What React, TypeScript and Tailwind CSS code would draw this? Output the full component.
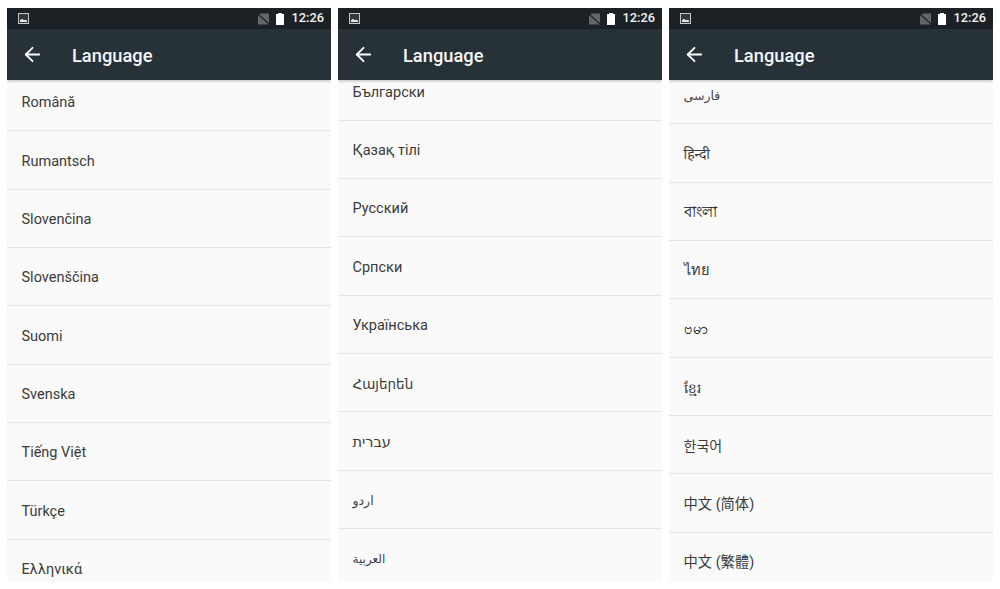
import { ArrowLeft } from 'lucide-react'

type Item = [string, string?]

const pages: { offset: string; items: Item[] }[] = [
  {
    offset: '-mt-[6.5px]',
    items: [['Română'], ['Rumantsch'], ['Slovenčina'], ['Slovenščina'], ['Suomi'], ['Svenska'], ['Tiếng Việt'], ['Türkçe'], ['Ελληνικά']],
  },
  {
    offset: '-mt-[17px]',
    items: [
      ['Български'],
      ['Қазақ тілі'],
      ['Русский'],
      ['Српски'],
      ['Українська'],
      ['Հայերեն', 'text-[13.5px] text-[#3b3b3b]'],
      ['עברית'],
      ['اردو', 'text-[12.5px] text-[#444444]'],
      ['العربية', 'text-[12px] text-[#444444]'],
    ],
  },
  {
    offset: '-mt-[13.5px]',
    items: [
      ['فارسی', 'text-[12.5px] text-[#444444]'],
      ['हिन्दी', 'text-[14px] text-[#3b3b3b]'],
      ['বাংলা', 'text-[14.5px] text-[#111111]'],
      ['ไทย'],
      ['ဗမာ', 'text-[14.5px] text-[#000000]'],
      ['ខ្មែរ', 'text-[13.5px] text-[#3b3b3b]'],
      ['한국어', 'text-[14px] text-[#3b3b3b]'],
      ['中文 (简体)', 'text-[14.3px] text-[#3b3b3b]'],
      ['中文 (繁體)', 'text-[14.3px] text-[#3b3b3b]'],
    ],
  },
]

function StatusBar() {
  return (
    <div className="flex h-[21px] shrink-0 items-center bg-[#1c2125] pl-[11px] pr-[7px]">
      <svg width="11" height="11" viewBox="0 0 11 11">
        <rect x="0.5" y="0.5" width="10" height="10" fill="#33383b" stroke="#c4c6c7" />
        <path d="M2 9V7.2L4 5.8l2 1.4L7.5 6.8 9 7.6V9z" fill="#e4e5e6" />
      </svg>
      <div className="flex-1" />
      <svg width="13" height="12" viewBox="0 0 13 12">
        <path d="M3.5 0.5H12V11.5H1V3z" fill="#62676a" />
        <path d="M0.5 0.5L12.5 11.5" stroke="#1c2125" strokeWidth="1.2" />
      </svg>
      <div className="ml-[6.5px] flex flex-col items-center">
        <div className="h-px w-[4px] bg-white" />
        <div className="h-[11px] w-[8px] bg-white" />
      </div>
      <span className="ml-[7.5px] text-[12.8px] leading-none font-medium text-[#f2f3f3]">12:26</span>
    </div>
  )
}

function Phone({ offset, items }: { offset: string; items: Item[] }) {
  return (
    <div className="flex h-[574px] w-[324px] flex-col overflow-hidden bg-[#fafafa]">
      <StatusBar />
      <div className="z-10 flex h-[50.5px] shrink-0 items-center bg-[#263238] pl-[14px] shadow-[0_1px_3px_rgba(0,0,0,0.25)]">
        <ArrowLeft size={23} strokeWidth={1.9} className="text-white" />
        <span className="ml-[28px] pt-[2px] text-[18.3px] font-medium text-[#f5f6f6]">Language</span>
      </div>
      <div className="min-h-0 flex-1 overflow-hidden">
        <div className={offset}>
          {items.map(([label, extra], i) => (
            <div
              key={i}
              className={`flex h-[58.33px] items-center border-b-[1.5px] border-[#e5e5e5] pl-[14.5px] pt-[3px] ${extra ?? 'text-[14.5px] text-[#3b3b3b]'}`}
            >
              {label}
            </div>
          ))}
        </div>
      </div>
    </div>
  )
}

export default function App() {
  return (
    <div
      className="flex h-[589px] w-[1000px] gap-[7px] overflow-hidden bg-white pl-[7px] pt-[8px]"
      style={{ fontFamily: 'Roboto, "Noto Sans", "DejaVu Sans", "Noto Sans CJK KR", "Noto Sans CJK SC", sans-serif' }}
    >
      {pages.map((p, i) => (
        <Phone key={i} offset={p.offset} items={p.items} />
      ))}
    </div>
  )
}
